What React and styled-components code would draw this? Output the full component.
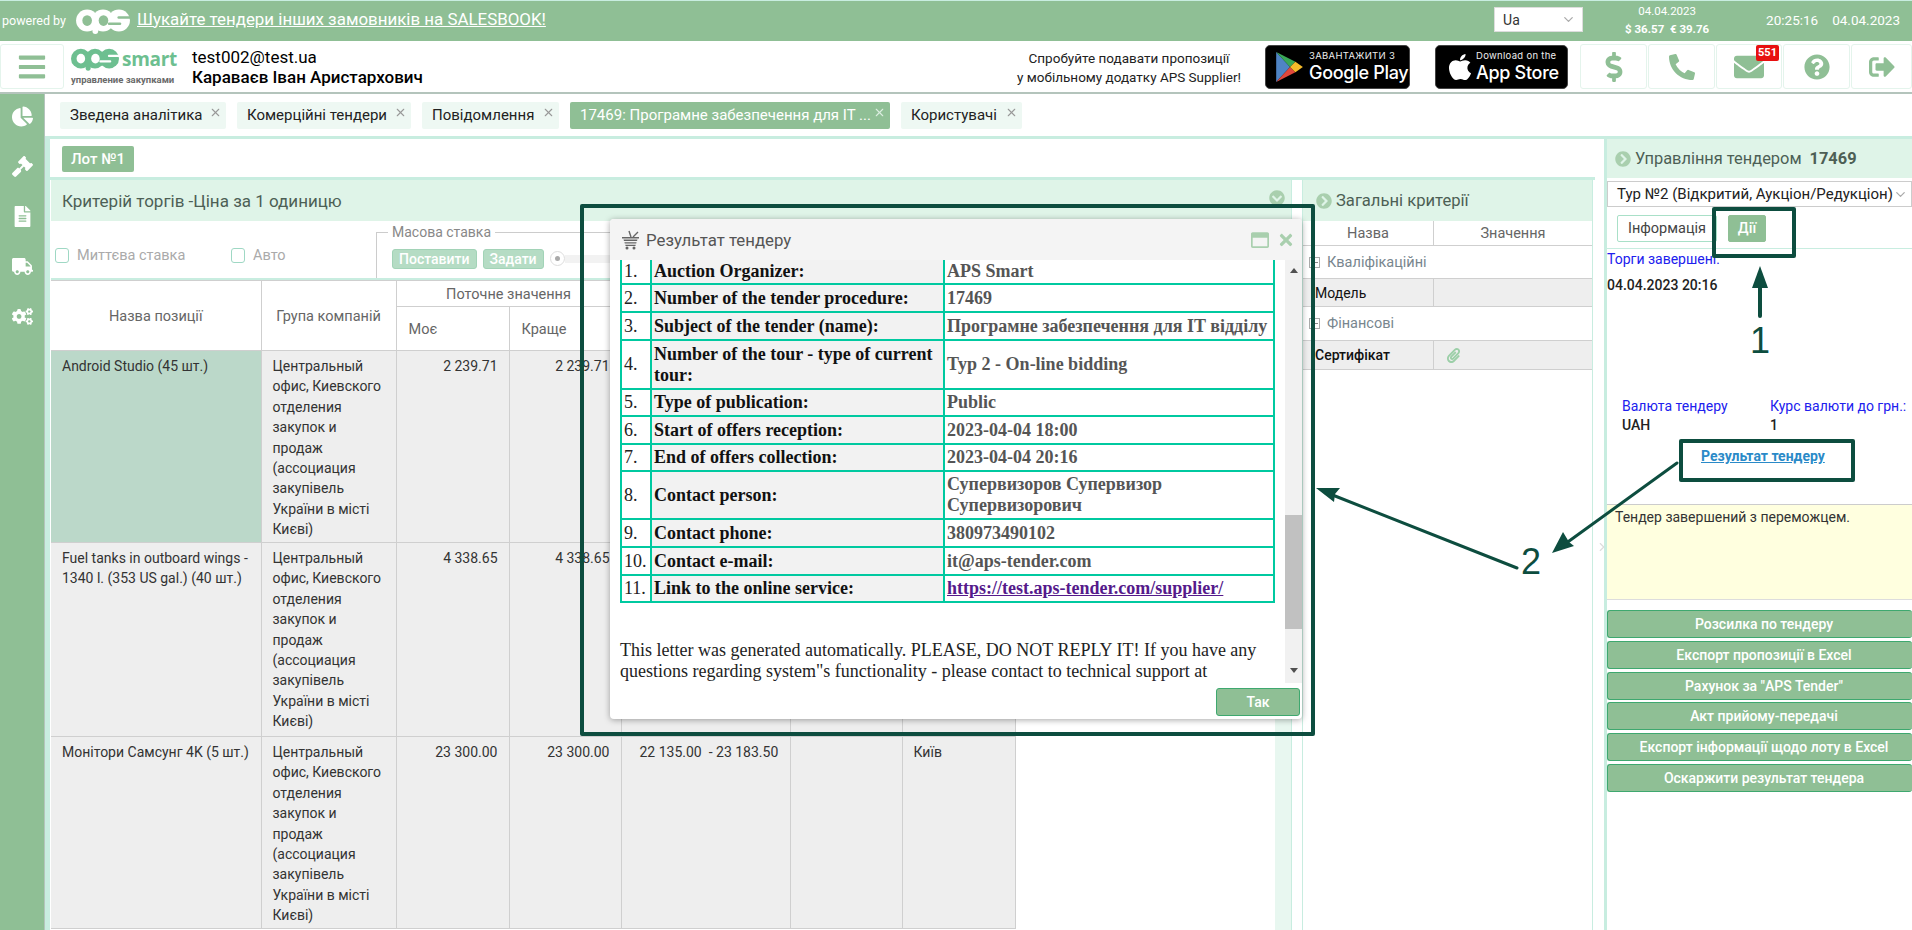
import React from 'react'
import styled, { createGlobalStyle } from 'styled-components'
import {
  FaApple, FaBars, FaChartPie, FaChevronCircleDown, FaChevronCircleRight, FaCogs,
  FaDollarSign, FaEnvelope, FaFileAlt, FaGavel, FaPaperclip, FaPhoneAlt, FaQuestionCircle,
  FaRegWindowMaximize, FaSignOutAlt, FaTimes, FaTruck,
} from 'react-icons/fa'
import { FiChevronDown, FiChevronRight, FiX } from 'react-icons/fi'

const GREEN = '#8fbf95'
const MINT = '#c8ede0'
const PALE = '#dff4e8'
const DARK = '#0d4d3f'
const TEAL = '#00c9a0'

const Global = createGlobalStyle`
  html, body { margin: 0; padding: 0; height: 100%; overflow: hidden; background: #fff; }
  body { font-family: Roboto, "Liberation Sans", sans-serif; font-size: 14px; color: #333; }
  * { box-sizing: border-box; }
`

const Page = styled.div`
  position: relative;
  width: 1912px;
  height: 930px;
  overflow: hidden;
  display: flex;
  flex-direction: column;
`

/* top bar */
const TopBar = styled.div`
  height: 41px;
  flex: none;
  border-top: 1px solid ${MINT};
  background: ${GREEN};
  color: #fff;
  display: flex;
  align-items: center;
  padding-left: 2px;
`
const Powered = styled.span`
  font-size: 12.5px;
  width: 74px;
  margin-bottom: 2px;
`
const PromoLink = styled.a`
  font-size: 16.9px;
  color: #fff;
  text-decoration: underline;
  margin-left: 7px;
  margin-bottom: 5px;
`
const LangSelect = styled.div`
  margin-left: auto;
  width: 89px;
  height: 25px;
  background: #fff;
  border: 1px solid #ddd;
  color: #333;
  font-size: 14px;
  display: flex;
  align-items: center;
  justify-content: space-between;
  padding: 0 6px 0 8px;
  margin-bottom: 3px;
  svg { color: #aaa; font-size: 15px; }
`
const Rates = styled.div`
  width: 114px;
  margin-left: 27px;
  text-align: center;
  font-size: 11.5px;
  line-height: 18px;
  margin-bottom: 3px;
  b { font-weight: 700; display: block; }
`
const Clock = styled.div`
  display: flex;
  gap: 14px;
  margin-left: 42px;
  margin-right: 12px;
  font-size: 13.5px;
  margin-bottom: 3px;
`

/* header */
const Header = styled.div`
  height: 53px;
  flex: none;
  display: flex;
  align-items: center;
  border-bottom: 2px solid #b4c4bc;
  position: relative;
`
const IconCell = styled.div`
  width: ${p => p.$w || 67}px;
  height: 45px;
  flex: none;
  border: 1px solid #e4f4ec;
  border-radius: 3px;
  background: #fff;
  color: ${GREEN};
  font-size: ${p => p.$size || 30}px;
  display: flex;
  align-items: center;
  justify-content: center;
  position: relative;
`
const Badge = styled.span`
  position: absolute;
  top: 0;
  right: 2px;
  background: #e81010;
  color: #fff;
  font-size: 11px;
  font-weight: 700;
  line-height: 14px;
  padding: 1px 2px;
  border-radius: 2px;
`
const LogoBlock = styled.div`
  width: 105px;
  margin-left: 7px;
  flex: none;
`
const LogoTop = styled.div`
  display: flex;
  align-items: center;
  gap: 3px;
  color: #6dbf90;
  font: 700 19px/25px "Open Sans", sans-serif;
  letter-spacing: -.3px;
`
const LogoSub = styled.div`
  font-size: 9.5px;
  font-weight: 700;
  color: #6a6a6a;
  line-height: 14px;
  margin-top: 1px;
  white-space: nowrap;
`
const UserBlock = styled.div`
  margin-left: 16px;
  font-size: 17px;
  line-height: 20px;
  color: #000;
  b { font-weight: 500; display: block; }
`
const Promo = styled.div`
  margin-left: auto;
  padding-top: 3px;
  width: 240px;
  text-align: center;
  font-size: 13.5px;
  line-height: 19.5px;
  color: #222;
`
const Store = styled.div`
  background: #000;
  border: 1px solid #444;
  border-radius: 5px;
  height: 44px;
  width: ${p => p.$w}px;
  margin-left: ${p => p.$ml}px;
  color: #fff;
  display: flex;
  align-items: center;
  gap: ${p => p.$gap}px;
  padding-left: ${p => p.$pl}px;
  flex: none;
`
const StoreText = styled.div`
  font-family: Inter, "Open Sans", sans-serif;
  white-space: nowrap;
  small { display: block; font-size: 9.5px; line-height: 11px; letter-spacing: .3px; color: #eee; }
  strong { display: block; font-size: 18px; line-height: 23px; font-weight: 500; letter-spacing: -.3px; }
`
const HeaderIcons = styled.div`
  display: flex;
  margin-left: 12px;
  gap: 1px;
`

/* body */
const Body = styled.div`
  flex: 1;
  display: flex;
  min-height: 0;
`
const Sidebar = styled.div`
  width: 44px;
  flex: none;
  margin-top: -2px;
  background: ${GREEN};
  color: #fff;
  display: flex;
  flex-direction: column;
  align-items: center;
  padding-top: 14px;
  gap: 29px;
  font-size: 21px;
  svg { display: block; }
`
const Content = styled.div`
  flex: 1;
  min-width: 0;
  display: flex;
  flex-direction: column;
  border-left: 1px solid #b4c4bc;
`
const Tabs = styled.div`
  height: 45px;
  flex: none;
  display: flex;
  padding: 8px 0 0 15px;
  gap: 11px;
  border-bottom: 3px solid ${MINT};
`
const Tab = styled.div`
  height: 27px;
  width: ${p => p.$w}px;
  padding-left: 10px;
  border-radius: 2px;
  background: ${p => (p.$active ? GREEN : '#eef8f3')};
  color: ${p => (p.$active ? '#fff' : '#222')};
  font-size: 15px;
  line-height: 27px;
  white-space: nowrap;
  position: relative;
`
const TabClose = styled(FiX)`
  position: absolute;
  top: 4px;
  right: 4px;
  font-size: 13px;
  color: ${p => (p.$active ? '#dceee0' : '#999')};
`
const Work = styled.div`
  flex: 1;
  display: flex;
  min-height: 0;
`
const Main = styled.div`
  width: 1550px;
  flex: none;
  display: flex;
  flex-direction: column;
  border-left: 5px solid ${MINT};
  padding-left: 1px;
`
const LotBar = styled.div`
  flex: none;
  padding: 7px 0 0 12px;
  border-bottom: 3px solid ${MINT};
  margin-left: -1px;
  height: 41px;
`
const LotBtn = styled.div`
  width: 72px;
  height: 26px;
  background: ${GREEN};
  color: #fff;
  font-size: 15px;
  font-weight: 500;
  border-radius: 2px;
  text-align: center;
  line-height: 26px;
`
const Panels = styled.div`
  flex: 1;
  display: flex;
  min-height: 0;
`
const Criteria = styled.div`
  width: 1241px;
  flex: none;
  display: flex;
  flex-direction: column;
  position: relative;
  border-right: 1px solid ${MINT};
  &::after {
    content: '';
    position: absolute;
    top: 41px;
    bottom: 0;
    right: 0;
    width: 16px;
    background: #e8f7f0;
  }
`
const PanelHead = styled.div`
  height: ${p => p.$h || 41}px;
  flex: none;
  background: ${PALE};
  color: #4d5f55;
  font-size: ${p => p.$fs || 17}px;
  display: flex;
  align-items: center;
  gap: 4px;
  padding-left: ${p => p.$pl || 11}px;
  position: relative;
  b { font-weight: 700; margin-left: 4px; }
  svg { color: #a9cfae; font-size: 16px; flex: none; }
`
const HeadToggle = styled(FaChevronCircleDown)`
  position: absolute;
  right: 6px;
  top: 10px;
`
const Toolbar = styled.div`
  height: 59px;
  flex: none;
  display: flex;
  align-items: center;
  padding-left: 4px;
  border-bottom: 2px solid ${MINT};
  position: relative;
`
const Check = styled.label`
  display: flex;
  align-items: center;
  gap: 8px;
  color: #aaa;
  font-size: 14.5px;
  width: ${p => p.$w}px;
  flex: none;
  padding-top: 12px;
  span {
    width: 14px;
    height: 15px;
    border: 1px solid #9fd8c4;
    border-radius: 3px;
    background: #fff;
  }
`
const MassField = styled.fieldset`
  margin: 0;
  padding: 0 0 0 15px;
  flex: 1;
  height: 53px;
  align-self: flex-end;
  border: 1px solid #ccc;
  border-bottom: 0;
  border-right: 0;
  display: flex;
  align-items: center;
  gap: 6px;
  legend { font-size: 14px; color: #888; padding: 0 4px; margin-left: -4px; line-height: 14px; }
`
const MassBtn = styled.div`
  background: #b5dcc4;
  border: 1px solid #a2d3b7;
  border-radius: 3px;
  color: #fff;
  height: 20px;
  line-height: 18px;
  padding: 0 6px;
  font-size: 14px;
  font-weight: 500;
`
const SliderKnob = styled.span`
  width: 15px;
  height: 15px;
  flex: none;
  border: 1px solid #ddd;
  border-radius: 50%;
  display: flex;
  align-items: center;
  justify-content: center;
  &::after { content: ''; width: 5px; height: 5px; border-radius: 50%; background: #aaa; }
`
const SliderTrack = styled.span`
  width: 60px;
  height: 8px;
  margin-left: -6px;
  background: #f2f2f2;
`
const Grid = styled.table`
  border-collapse: collapse;
  table-layout: fixed;
  width: 964px;
  th, td { border: 1px solid #cfcfcf; overflow: hidden; }
  tr > :first-child { border-left: 0; }
  th { font-weight: 400; color: #666; font-size: 14.5px; background: #fff; padding-top: 2px; }
  td {
    background: #eee;
    vertical-align: top;
    font-size: 14px;
    line-height: 20.4px;
    color: #333;
    padding: 5px 11px 0;
  }
`
const NameCell = styled.td`
  && { background: ${p => (p.$selected ? '#bbd8c9' : '#eee')}; }
`
const NumCell = styled.td`
  && { text-align: right; }
`
const RangeCell = styled.td`
  && { white-space: pre; padding-left: 18px; }
`
const SubHead = styled.th`
  && { text-align: left; padding-left: 12px; height: 44px; }
`

/* general criteria */
const Gutter = styled.div`
  width: 10px;
  flex: none;
`
const General = styled.div`
  width: 291px;
  flex: none;
  border-left: 1px solid ${MINT};
  border-right: 1px solid ${MINT};
  display: flex;
  flex-direction: column;
`
const CritRow = styled.div`
  display: grid;
  grid-template-columns: 130px 1fr;
  height: ${p => p.$h}px;
  flex: none;
  border-bottom: 1px solid #cfcfcf;
  background: ${p => (p.$gray ? '#eee' : '#fff')};
  align-items: stretch;
  & > div { display: flex; align-items: center; padding-left: 12px; }
  & > div + div { border-left: 1px solid #cfcfcf; }
`
const CritHead = styled.div`
  && { justify-content: center; padding: 0; color: #666; font-size: 14.5px; }
`
const CritName = styled.div`
  color: #111;
  font-size: 14px;
  font-weight: ${p => (p.$bold ? 500 : 400)};
`
const GroupRow = styled.div`
  height: ${p => p.$h}px;
  flex: none;
  display: flex;
  align-items: center;
  gap: 7px;
  border-bottom: 1px solid #cfcfcf;
  color: #78868e;
  font-size: 14.5px;
  padding-left: 6px;
  i {
    width: 11px;
    height: 11px;
    border: 1px solid #aaa;
    position: relative;
    flex: none;
    &::after { content: ''; position: absolute; left: 1px; right: 1px; top: 4px; height: 1px; background: #888; }
  }
`

/* right panel */
const Side = styled.div`
  flex: 1;
  min-width: 0;
  border-left: 3px solid ${MINT};
  margin-left: 9px;
  display: flex;
  flex-direction: column;
  position: relative;
`
const SideSelect = styled.div`
  height: 26px;
  flex: none;
  margin: 3px 0 0;
  border: 1px solid #ccc;
  display: flex;
  align-items: center;
  justify-content: space-between;
  padding: 0 3px 0 9px;
  font-size: 15px;
  color: #222;
  white-space: nowrap;
  svg { color: #aaa; font-size: 15px; }
`
const SideTabs = styled.div`
  height: 42px;
  flex: none;
  padding: 8px 0 0 10px;
  border-bottom: 1px solid ${MINT};
  display: flex;
  gap: 11px;
`
const SideTab = styled.div`
  height: 27px;
  width: ${p => p.$w}px;
  border-radius: 2px;
  border: 1px solid ${p => (p.$active ? GREEN : '#a9e0c8')};
  background: ${p => (p.$active ? GREEN : '#fff')};
  color: ${p => (p.$active ? '#fff' : '#444')};
  font-size: 14.5px;
  font-weight: ${p => (p.$active ? 500 : 400)};
  text-align: center;
  line-height: 25px;
`
const BlueLabel = styled.div`
  color: #2020ee;
  font-size: 14px;
  line-height: 18px;
`
const Status = styled.div`
  padding: 1px 0 0 0;
  height: 148px;
  flex: none;
  strong { display: block; margin-top: 8px; font-weight: 500; font-size: 14px; color: #222; line-height: 18px; }
`
const CurrencyRow = styled.div`
  display: flex;
  padding-left: 15px;
  flex: none;
  height: 37px;
  & > div:first-child { width: 148px; }
  strong { display: block; font-weight: 500; font-size: 14px; color: #222; line-height: 16px; margin-top: 2px; white-space: nowrap; }
  ${BlueLabel} { white-space: nowrap; }
`
const ResultLink = styled.a`
  align-self: flex-start;
  margin: 12px 0 0 94px;
  height: 58px;
  flex: none;
  color: #2a8ac8;
  font-size: 14px;
  font-weight: 700;
  line-height: 20px;
  text-decoration: underline;
`
const Note = styled.div`
  height: 96px;
  flex: none;
  background: #ffffdf;
  border-top: 1px solid #ccc;
  border-bottom: 1px solid #ddd;
  padding: 1px 0 0 8px;
  font-size: 14px;
  line-height: 22px;
  color: #333;
`
const ActionList = styled.div`
  display: flex;
  flex-direction: column;
  gap: 2.8px;
  margin-top: 10px;
`
const Action = styled.div`
  height: 28px;
  background: ${GREEN};
  border: 1px solid #3ea86f;
  border-radius: 3px;
  border-right: 0;
  color: #fff;
  font-size: 14px;
  font-weight: 500;
  text-align: center;
  line-height: 26px;
  padding-left: 8px;
`
const SideHandle = styled(FiChevronRight)`
  position: absolute;
  left: -12px;
  top: 401px;
  color: #ddd;
  font-size: 14px;
`

/* dialog */
const Dialog = styled.div`
  position: absolute;
  left: 610px;
  top: 219px;
  width: 692px;
  height: 500px;
  background: #fff;
  border-radius: 4px;
  box-shadow: 0 1px 6px rgba(0, 0, 0, .35);
  display: flex;
  flex-direction: column;
  z-index: 5;
`
const DialogTitle = styled.div`
  height: 41px;
  flex: none;
  background: #f4f4f4;
  border-radius: 4px 4px 0 0;
  display: flex;
  align-items: center;
  padding: 0 7px 0 11px;
  gap: 6px;
  color: #555;
  font-size: 16.8px;
`
const TitleTools = styled.div`
  margin-left: auto;
  display: flex;
  align-items: center;
  gap: 8px;
  color: #a9cfae;
  font-size: 18px;
  svg { display: block; }
`
const DialogBody = styled.div`
  flex: none;
  height: 423px;
  display: flex;
`
const DialogScroll = styled.div`
  flex: 1;
  min-width: 0;
  overflow: hidden;
  padding-left: 10px;
  font-family: "Liberation Serif", "Times New Roman", serif;
  font-size: 18px;
  color: #222;
`
const LetterTable = styled.table`
  border-collapse: collapse;
  table-layout: fixed;
  width: 655px;
  td {
    border: 2px solid ${TEAL};
    padding: 0 2px;
    line-height: 21px;
  }
  tr:first-child td { border-top: 0; }
`
const NumTd = styled.td`
  color: #222;
  width: 30px;
`
const LabelTd = styled.td`
  background: #f2f2f2;
  font-weight: 700;
  color: #111;
  width: 293px;
`
const ValueTd = styled.td`
  font-weight: 700;
  color: #555;
  a { color: #551a8b; }
`
const LetterText = styled.p`
  margin: 37px 0 0;
  line-height: 21px;
  width: 660px;
`
const ScrollTrack = styled.div`
  width: 17px;
  flex: none;
  background: #f1f1f1;
  display: flex;
  flex-direction: column;
  align-items: stretch;
`
const ScrollArrow = styled.span`
  height: 0;
  flex: none;
  align-self: center;
  border-left: 4px solid transparent;
  border-right: 4px solid transparent;
  ${p => (p.$up ? 'border-bottom: 5px solid #505050; margin-top: 8px;' : 'border-top: 5px solid #505050; margin-top: 39px;')}
`
const ScrollThumb = styled.div`
  height: 114px;
  flex: none;
  background: #c1c1c1;
  margin-top: 242px;
`
const DialogFoot = styled.div`
  flex: 1;
  display: flex;
  justify-content: flex-end;
  align-items: flex-start;
  padding: 5px 2px 0 0;
`
const OkBtn = styled.div`
  width: 84px;
  height: 28px;
  background: ${GREEN};
  border: 1px solid #3ea86f;
  border-radius: 3px;
  color: #fff;
  font-size: 14px;
  font-weight: 500;
  text-align: center;
  line-height: 26px;
`

/* annotations drawn over the screenshot */
const Overlay = styled.svg`
  position: absolute;
  left: 0;
  top: 0;
  z-index: 6;
  pointer-events: none;
`
const Digit = styled.span`
  position: absolute;
  left: ${p => p.$x}px;
  top: ${p => p.$y}px;
  z-index: 7;
  color: ${DARK};
  font: 400 36px/36px "Liberation Sans", Arial, sans-serif;
`

const ApsLogo = ({ w, h, color, hole }) => (
  <svg width={w} height={h} viewBox="0 0 56 26" style={{ flex: 'none', display: 'block' }}>
    <g fill={color}>
      <circle cx="11.5" cy="12" r="11.5" />
      <circle cx="28" cy="12" r="11.5" />
      <circle cx="44.5" cy="12" r="11.5" />
      <rect x="17" y="12" width="6" height="14" rx="3" />
    </g>
    <g fill={hole}>
      <ellipse cx="11.5" cy="12" rx="5" ry="5.6" />
      <ellipse cx="28.5" cy="12" rx="5" ry="5.6" />
      <rect x="43" y="7.5" width="14" height="2.6" rx="1.3" />
      <rect x="33" y="14" width="14" height="2.6" rx="1.3" />
    </g>
  </svg>
)

const PlayMark = () => (
  <svg width="28" height="32" viewBox="0 0 26 30" style={{ flex: 'none' }}>
    <polygon points="1,1 14,15 1,29" fill="#4f84c4" />
    <polygon points="1,1 19,10 14,15" fill="#3aa757" />
    <polygon points="1,29 19,20 14,15" fill="#e0483c" />
    <polygon points="19,10 26,15 19,20 14,15" fill="#f7bb2a" />
  </svg>
)

// кошик у заголовку діалогу
const BasketIcon = () => (
  <svg width="19" height="20" viewBox="0 0 19 20" style={{ flex: 'none' }}>
    <path d="M8 1 L10 7 M17 2 L12 7" stroke="#666" strokeWidth="1.4" fill="none" />
    <path d="M1 7 H18 V8.4 H1 Z M2.5 9.6 H16.5 L16 11 H3 Z M3.4 12.2 H15.6 L15.2 13.6 H3.8 Z M4.2 14.8 H14.8 L14.4 16 H4.6 Z" fill="#666" />
    <circle cx="6" cy="18" r="1.5" fill="#666" />
    <circle cx="13" cy="18" r="1.5" fill="#666" />
  </svg>
)

const TABS = [
  { t: 'Зведена аналітика', w: 166 },
  { t: 'Комерційні тендери', w: 174 },
  { t: 'Повідомлення', w: 137 },
  { t: '17469: Програмне забезпечення для IT ...', w: 320, active: true },
  { t: 'Користувачі', w: 121 },
]

const COMPANY = 'Центральный офис, Киевского отделения закупок и продаж (ассоциация закупівель України в місті Києві)'

const ROWS = [
  { name: 'Android Studio (45 шт.)', mine: '2 239.71', best: '2 239.71', h: 192, selected: true },
  { name: 'Fuel tanks in outboard wings - 1340 l. (353 US gal.) (40 шт.)', mine: '4 338.65', best: '4 338.65', h: 194 },
  { name: 'Монітори Самсунг 4K (5 шт.)', mine: '23 300.00', best: '23 300.00', range: '22 135.00  - 23 183.50', city: 'Київ', h: 192 },
]

const LETTER = [
  ['1.', 'Auction Organizer:', 'APS Smart', 24],
  ['2.', 'Number of the tender procedure:', '17469', 28],
  ['3.', 'Subject of the tender (name):', 'Програмне забезпечення для IT відділу', 28],
  ['4.', 'Number of the tour - type of current tour:', 'Тур 2 - On-line bidding', 49],
  ['5.', 'Type of publication:', 'Public', 27],
  ['6.', 'Start of offers reception:', '2023-04-04 18:00', 28],
  ['7.', 'End of offers collection:', '2023-04-04 20:16', 27],
  ['8.', 'Contact person:', 'Супервизоров Супервизор Супервизорович', 48],
  ['9.', 'Contact phone:', '380973490102', 28],
  ['10.', 'Contact e-mail:', 'it@aps-tender.com', 28],
]

const ACTIONS = [
  'Розсилка по тендеру',
  'Експорт пропозиції в Excel',
  'Рахунок за "APS Tender"',
  'Акт прийому-передачі',
  'Експорт інформації щодо лоту в Excel',
  'Оскаржити результат тендера',
]

export default function App() {
  return (
    <Page>
      <Global />
      <TopBar>
        <Powered>powered by</Powered>
        <ApsLogo w={54} h={25} color="#fff" hole={GREEN} />
        <PromoLink href="#">Шукайте тендери інших замовників на SALESBOOK!</PromoLink>
        <LangSelect>Ua <FiChevronDown /></LangSelect>
        <Rates>04.04.2023<b>$ 36.57 &nbsp;€ 39.76</b></Rates>
        <Clock><span>20:25:16</span><span>04.04.2023</span></Clock>
      </TopBar>

      <Header>
        <IconCell $w={64}><FaBars /></IconCell>
        <LogoBlock>
          <LogoTop><ApsLogo w={48} h={23} color="#6dbf90" hole="#fff" />smart</LogoTop>
          <LogoSub>управление закупками</LogoSub>
        </LogoBlock>
        <UserBlock>test002@test.ua<b>Караваєв Іван Аристархович</b></UserBlock>
        <Promo>Спробуйте подавати пропозиції<br />у мобільному додатку APS Supplier!</Promo>
        <Store $w={145} $ml={16} $pl={9} $gap={6}>
          <PlayMark />
          <StoreText><small>ЗАВАНТАЖИТИ З</small><strong>Google Play</strong></StoreText>
        </Store>
        <Store $w={133} $ml={25} $pl={9} $gap={1}>
          <FaApple size={30} />
          <StoreText><small>Download on the</small><strong>App Store</strong></StoreText>
        </Store>
        <HeaderIcons>
          <IconCell><FaDollarSign /></IconCell>
          <IconCell $size={26}><FaPhoneAlt /></IconCell>
          <IconCell $w={66}><FaEnvelope /><Badge>551</Badge></IconCell>
          <IconCell $size={26}><FaQuestionCircle /></IconCell>
          <IconCell $w={61} $size={26}><FaSignOutAlt /></IconCell>
        </HeaderIcons>
      </Header>

      <Body>
        <Sidebar>
          <FaChartPie />
          <FaGavel />
          <FaFileAlt />
          <FaTruck />
          <FaCogs />
        </Sidebar>
        <Content>
          <Tabs>
            {TABS.map(tab => (
              <Tab key={tab.t} $w={tab.w} $active={tab.active}>
                {tab.t}
                <TabClose $active={tab.active} />
              </Tab>
            ))}
          </Tabs>
          <Work>
            <Main>
              <LotBar><LotBtn>Лот №1</LotBtn></LotBar>
              <Panels>
                <Criteria>
                  <PanelHead>
                    Критерій торгів -Ціна за 1 одиницю
                    <HeadToggle />
                  </PanelHead>
                  <Toolbar>
                    <Check $w={176}><span />Миттєва ставка</Check>
                    <Check $w={145}><span />Авто</Check>
                    <MassField>
                      <legend>Масова ставка</legend>
                      <MassBtn>Поставити</MassBtn>
                      <MassBtn>Задати</MassBtn>
                      <SliderKnob />
                      <SliderTrack />
                    </MassField>
                  </Toolbar>
                  <Grid>
                    <colgroup>
                      <col style={{ width: 210 }} />
                      <col style={{ width: 135 }} />
                      <col style={{ width: 113 }} />
                      <col style={{ width: 112 }} />
                      <col style={{ width: 169 }} />
                      <col style={{ width: 112 }} />
                      <col style={{ width: 113 }} />
                    </colgroup>
                    <thead>
                      <tr style={{ height: 26 }}>
                        <th rowSpan={2}>Назва позиції</th>
                        <th rowSpan={2}>Група компаній</th>
                        <th colSpan={2}>Поточне значення</th>
                        <th rowSpan={2} />
                        <th rowSpan={2} />
                        <th rowSpan={2} />
                      </tr>
                      <tr>
                        <SubHead>Моє</SubHead>
                        <SubHead>Краще</SubHead>
                      </tr>
                    </thead>
                    <tbody>
                      {ROWS.map(r => (
                        <tr key={r.name} style={{ height: r.h }}>
                          <NameCell $selected={r.selected}>{r.name}</NameCell>
                          <td>{COMPANY}</td>
                          <NumCell>{r.mine}</NumCell>
                          <NumCell>{r.best}</NumCell>
                          <RangeCell>{r.range}</RangeCell>
                          <td />
                          <td>{r.city}</td>
                        </tr>
                      ))}
                    </tbody>
                  </Grid>
                </Criteria>
                <Gutter />
                <General>
                  <PanelHead $pl={13} $fs={16.6}><FaChevronCircleRight />Загальні критерії</PanelHead>
                  <CritRow $h={25}>
                    <CritHead>Назва</CritHead>
                    <CritHead>Значення</CritHead>
                  </CritRow>
                  <GroupRow $h={33}><i />Кваліфікаційні</GroupRow>
                  <CritRow $h={28} $gray>
                    <CritName>Модель</CritName>
                    <div />
                  </CritRow>
                  <GroupRow $h={34}><i />Фінансові</GroupRow>
                  <CritRow $h={29} $gray>
                    <CritName $bold>Сертифікат</CritName>
                    <div><FaPaperclip color="#9ccfa8" size={15} /></div>
                  </CritRow>
                </General>
              </Panels>
            </Main>
            <Side>
              <PanelHead $h={39} $pl={8} $fs={16.4}>
                <FaChevronCircleRight />Управління тендером<b>17469</b>
              </PanelHead>
              <SideSelect>Тур №2 (Відкритий, Аукціон/Редукціон) <FiChevronDown /></SideSelect>
              <SideTabs>
                <SideTab $w={100}>Інформація</SideTab>
                <SideTab $w={38} $active>Дії</SideTab>
              </SideTabs>
              <Status>
                <BlueLabel>Торги завершені:</BlueLabel>
                <strong>04.04.2023 20:16</strong>
              </Status>
              <CurrencyRow>
                <div><BlueLabel>Валюта тендеру</BlueLabel><strong>UAH</strong></div>
                <div><BlueLabel>Курс валюти до грн.:</BlueLabel><strong>1</strong></div>
              </CurrencyRow>
              <ResultLink href="#">Результат тендеру</ResultLink>
              <Note>Тендер завершений з переможцем.</Note>
              <ActionList>
                {ACTIONS.map(a => <Action key={a}>{a}</Action>)}
              </ActionList>
              <SideHandle />
            </Side>
          </Work>
        </Content>
      </Body>

      <Dialog>
        <DialogTitle>
          <BasketIcon />
          Результат тендеру
          <TitleTools><FaRegWindowMaximize /><FaTimes /></TitleTools>
        </DialogTitle>
        <DialogBody>
          <DialogScroll>
            <LetterTable>
              <tbody>
                {LETTER.map(([n, label, value, h]) => (
                  <tr key={n} style={{ height: h }}>
                    <NumTd>{n}</NumTd>
                    <LabelTd>{label}</LabelTd>
                    <ValueTd>{value}</ValueTd>
                  </tr>
                ))}
                <tr style={{ height: 27 }}>
                  <NumTd>11.</NumTd>
                  <LabelTd>Link to the online service:</LabelTd>
                  <ValueTd><a href="#">https://test.aps-tender.com/supplier/</a></ValueTd>
                </tr>
              </tbody>
            </LetterTable>
            <LetterText>
              This letter was generated automatically. PLEASE, DO NOT REPLY IT! If you have any questions regarding
              system"s functionality - please contact to technical support at
            </LetterText>
          </DialogScroll>
          <ScrollTrack>
            <ScrollArrow $up />
            <ScrollThumb />
            <ScrollArrow />
          </ScrollTrack>
        </DialogBody>
        <DialogFoot><OkBtn>Так</OkBtn></DialogFoot>
      </Dialog>

      <Overlay width="1912" height="930">
        <g fill="none" stroke={DARK} strokeWidth="4" strokeLinejoin="round" strokeLinecap="round">
          <rect x="582" y="206" width="731" height="528" />
          <rect x="1714" y="209" width="80" height="47" />
          <rect x="1681" y="441" width="172" height="39" />
          <path d="M1760 283 V316" />
          <path d="M1677 463 L1565 544" strokeWidth="3" />
          <path d="M1517 568 L1330 494" strokeWidth="3" />
        </g>
        <g fill={DARK}>
          <polygon points="1760,266 1768,288 1752,288" />
          <polygon points="1552,553 1563,532 1569,542 1574,546" />
          <polygon points="1316,488 1340,488 1335,494 1334,502" />
        </g>
      </Overlay>
      <Digit $x={1750} $y={323}>1</Digit>
      <Digit $x={1521} $y={544}>2</Digit>
    </Page>
  )
}
